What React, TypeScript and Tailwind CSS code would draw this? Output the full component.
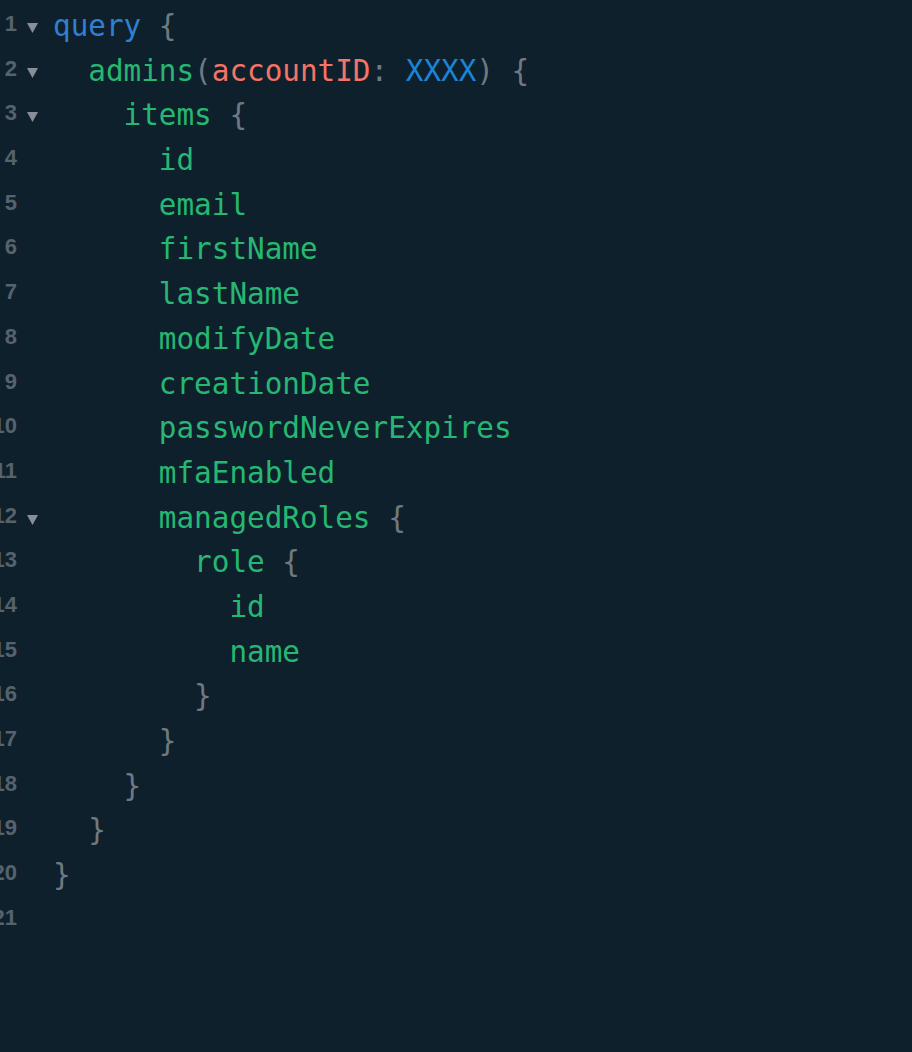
type Tok = { t: string; c: string };

const P = "text-[#6f7981]";
const F = "text-[#26b872]";

const lines: { fold?: boolean; toks: Tok[] }[] = [
  { fold: true, toks: [{ t: "query", c: "text-[#2f7fd3]" }, { t: " {", c: P }] },
  {
    fold: true,
    toks: [
      { t: "  admins", c: F },
      { t: "(", c: P },
      { t: "accountID", c: "text-[#f47466]" },
      { t: ": ", c: P },
      { t: "XXXX", c: "text-[#1b84d6]" },
      { t: ")", c: P },
      { t: " {", c: P },
    ],
  },
  { fold: true, toks: [{ t: "    items", c: F }, { t: " {", c: P }] },
  { toks: [{ t: "      id", c: F }] },
  { toks: [{ t: "      email", c: F }] },
  { toks: [{ t: "      firstName", c: F }] },
  { toks: [{ t: "      lastName", c: F }] },
  { toks: [{ t: "      modifyDate", c: F }] },
  { toks: [{ t: "      creationDate", c: F }] },
  { toks: [{ t: "      passwordNeverExpires", c: F }] },
  { toks: [{ t: "      mfaEnabled", c: F }] },
  { fold: true, toks: [{ t: "      managedRoles", c: F }, { t: " {", c: P }] },
  { toks: [{ t: "        role", c: F }, { t: " {", c: P }] },
  { toks: [{ t: "          id", c: F }] },
  { toks: [{ t: "          name", c: F }] },
  { toks: [{ t: "        }", c: P }] },
  { toks: [{ t: "      }", c: P }] },
  { toks: [{ t: "    }", c: P }] },
  { toks: [{ t: "  }", c: P }] },
  { toks: [{ t: "}", c: P }] },
  { toks: [] },
];

function Fold() {
  return (
    <svg width="11" height="10" viewBox="0 0 11 10">
      <path d="M0 0 H11 L5.5 10 Z" fill="#868f97" />
    </svg>
  );
}

export default function App() {
  return (
    <div className="w-full h-[1052px] overflow-hidden bg-[#0f202d] pt-[4px]">
      {lines.map((line, i) => (
        <div key={i} className="flex h-[44.7px]">
          <div className="w-[17px] shrink-0 flex justify-end">
            <span
              className="mt-[9px] leading-[22px] text-[22px] font-bold text-[#56626c] whitespace-nowrap"
              style={{ fontFamily: '"Liberation Sans", Arial, sans-serif' }}
            >
              {i + 1}
            </span>
          </div>
          <div className="w-[36px] shrink-0 pl-[10px] pt-[19px]">
            {line.fold && <Fold />}
          </div>
          <pre
            className="m-0 text-[29.3px] leading-[44.7px] whitespace-pre"
            style={{ fontFamily: '"DejaVu Sans Mono", "Liberation Mono", monospace' }}
          >
            {line.toks.map((tok, j) => (
              <span key={j} className={tok.c}>
                {tok.t}
              </span>
            ))}
          </pre>
        </div>
      ))}
    </div>
  );
}
